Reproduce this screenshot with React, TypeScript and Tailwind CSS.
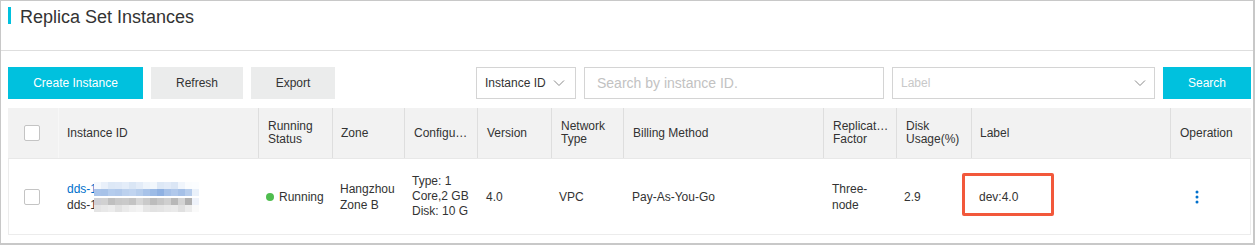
import React from "react";

const cols =
  "grid grid-cols-[50px_200px_74px_72px_73px_74px_72px_200px_73px_75px_199px_81px]";

const blueBlocks = [
  ["#f4f8fd", "#e9f0fa", "#dde8f6", "#dfe9f7", "#e4edf9", "#dae6f5", "#e3ecf8", "#eef4fb", "#f2f7fc", "#dde8f6", "#e2ebf8", "#dbe6f5", "#f0f5fc", "#fafcfe", "#fbfdff"],
  ["#a9c3e9", "#a7c2e8", "#b4cced", "#b1c9eb", "#bcd1ee", "#c0d4f0", "#b6cdec", "#a8c3e9", "#9cbbe6", "#8fb1e2", "#a6c1e8", "#b0c8eb", "#a5c0e7", "#b7cdec", "#eaf1fa"],
];
const grayBlocks = [
  ["#cfcfd4", "#d1d1d1", "#bfbfbf", "#c8c8c8", "#cacaca", "#c3c3c3", "#d6d6d6", "#cacaca", "#bcbcbc", "#c6c6c6", "#cfcfcf", "#b8b8b8", "#d3d3d3", "#b0b0b0", "#eef2fa"],
  ["#e4e4e4", "#e8e8e8", "#ececec", "#e2e2e2", "#eaeaea", "#f0f0f0", "#f3f3f3", "#e6e6e6", "#e2e2e2", "#e4e4e4", "#e8e8e8", "#eaeaea", "#e0e0e0", "#ececec", "#fafafa"],
];

function Pixelated({ rows }: { rows: string[][] }) {
  return (
    <div className="flex flex-col -ml-[3px]">
      {rows.map((r, i) => (
        <div key={i} className="flex">
          {r.map((c, j) => (
            <div key={j} className="w-[7px] h-[7px]" style={{ backgroundColor: c }} />
          ))}
        </div>
      ))}
    </div>
  );
}

function Chevron() {
  return (
    <svg width="12" height="8" viewBox="0 0 12 8" className="shrink-0">
      <polyline points="1,1.5 6,6.5 11,1.5" fill="none" stroke="#8a8a8a" strokeWidth="1" />
    </svg>
  );
}

function Checkbox() {
  return <div className="w-[16px] h-[16px] border border-[#c4c4c4] rounded-[2px] bg-white" />;
}

export default function App() {
  return (
    <div className="w-[1255px] h-[245px] bg-white border border-[#c8c8c8] border-r-2 border-b-2 font-['Liberation_Sans',Arial,sans-serif] text-[#333] text-[12px] overflow-hidden">
      {/* Title */}
      <div className="h-[50px] border-b border-[#dedede] flex items-start pt-[4px] pl-[7px]">
        <div className="w-[3px] h-[17px] mt-[2px] bg-[#00c1de]" />
        <div className="ml-[9px] text-[18px] leading-[24px] text-[#333]">Replica Set Instances</div>
      </div>

      <div className="pl-[7px] pr-[2px]">
        {/* Toolbar */}
        <div className="mt-[16px] flex justify-between h-[32px]">
          <div className="flex gap-[8px]">
            <button className="w-[135px] h-[32px] bg-[#00c1de] text-white text-[12px]">Create Instance</button>
            <button className="w-[92px] h-[32px] bg-[#ebecec] text-[#333] text-[12px]">Refresh</button>
            <button className="w-[84px] h-[32px] bg-[#ebecec] text-[#333] text-[12px]">Export</button>
          </div>
          <div className="flex gap-[8px]">
            <div className="w-[100px] h-[32px] border border-[#d4d4d4] flex items-center justify-between pl-[8px] pr-[10px]">
              <span className="text-[12px] text-[#333]">Instance ID</span>
              <Chevron />
            </div>
            <div className="w-[300px] h-[32px] border border-[#d4d4d4] flex items-center pl-[12px]">
              <span className="text-[14px] text-[#c2c2c2]">Search by instance ID.</span>
            </div>
            <div className="w-[263px] h-[32px] border border-[#d4d4d4] flex items-center justify-between pl-[8px] pr-[8px]">
              <span className="text-[12px] text-[#c8c8c8]">Label</span>
              <Chevron />
            </div>
            <button className="w-[88px] h-[32px] bg-[#00c1de] text-white text-[12px]">Search</button>
          </div>
        </div>

        {/* Table */}
        <div className="mt-[9px] w-[1243px]">
          <div className={`${cols} h-[51px] bg-[#f2f2f2] border-b border-[#e8e8e8] leading-[13px]`}>
            <div className="flex items-center pl-[16px]"><Checkbox /></div>
            <div className="flex items-center pl-[8px] border-l border-[#f7f7f7]">Instance ID</div>
            <div className="flex items-center pl-[9px] border-l border-[#dedede]">Running<br />Status</div>
            <div className="flex items-center pl-[8px] border-l border-[#dedede]">Zone</div>
            <div className="flex items-center pl-[9px] border-l border-[#dedede]">Configu…</div>
            <div className="flex items-center pl-[9px] border-l border-[#dedede]">Version</div>
            <div className="flex items-center pl-[9px] border-l border-[#dedede]">Network<br />Type</div>
            <div className="flex items-center pl-[9px] border-l border-[#dedede]">Billing Method</div>
            <div className="flex items-center pl-[9px] border-l border-[#dedede]">Replicat…<br />Factor</div>
            <div className="flex items-center pl-[9px] border-l border-[#dedede]">Disk<br />Usage(%)</div>
            <div className="flex items-center pl-[8px] border-l border-[#dedede]">Label</div>
            <div className="flex items-center pl-[9px] border-l border-[#dedede]">Operation</div>
          </div>

          <div className={`${cols} h-[76px] border-b border-[#ececec] shadow-[inset_1px_0_0_#ececec,inset_-1px_0_0_#ececec] leading-[16px]`}>
            <div className="flex items-center pl-[16px]"><Checkbox /></div>
            <div className="flex flex-col justify-center pl-[9px]">
              <div className="flex items-center">
                <span className="text-[#0070cc]">dds-1</span>
                <Pixelated rows={blueBlocks} />
              </div>
              <div className="flex items-center">
                <span>dds-1</span>
                <Pixelated rows={grayBlocks} />
              </div>
            </div>
            <div className="flex items-center pl-[8px] gap-[5px]">
              <span className="w-[8px] h-[8px] rounded-full bg-[#4fbd4f]" />
              <span>Running</span>
            </div>
            <div className="flex items-center pl-[8px]">Hangzhou<br />Zone B</div>
            <div className="flex items-center pl-[8px] leading-[15px]">Type: 1<br />Core,2 GB<br />Disk: 10 G</div>
            <div className="flex items-center pl-[9px]">4.0</div>
            <div className="flex items-center pl-[8px]">VPC</div>
            <div className="flex items-center pl-[9px]">Pay-As-You-Go</div>
            <div className="flex items-center pl-[9px]">Three-<br />node</div>
            <div className="flex items-center pl-[8px]">2.9</div>
            <div className="relative flex items-center pl-[8px]">
              <span>dev:4.0</span>
              <div className="absolute left-[-9px] top-[14px] w-[92px] h-[43px] border-[3px] border-[#f2583b] rounded-[2px]" />
            </div>
            <div className="flex items-center pl-[25px]">
              <svg width="4" height="14" viewBox="0 0 4 14">
                <circle cx="2" cy="2" r="1.5" fill="#0070cc" />
                <circle cx="2" cy="7" r="1.5" fill="#0070cc" />
                <circle cx="2" cy="12" r="1.5" fill="#0070cc" />
              </svg>
            </div>
          </div>
        </div>
      </div>
    </div>
  );
}
